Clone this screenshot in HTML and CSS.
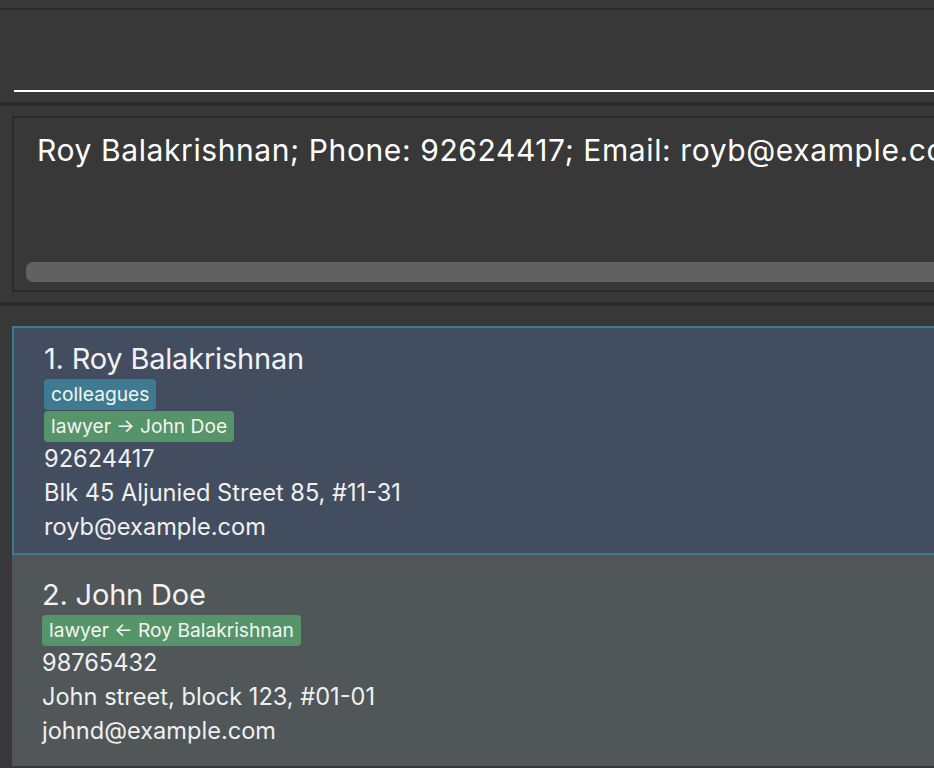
FILE: index.html
```html
<!DOCTYPE html>
<html>
<head>
<meta charset="utf-8">
<link rel="stylesheet" href="styles.css">
</head>
<body>
<div class="app">
  <div class="top-strip"></div>
  <section class="command-pane">
    <div class="command-field"></div>
  </section>
  <div class="separator"></div>
  <section class="result-pane">
    <div class="result-box">
      <div class="result-text">Roy Balakrishnan; Phone: 92624417; Email: royb@example.com; Address: Blk 45 Aljunied Street 85, #11-31; Tags: [colleagues]</div>
      <div class="scrollbar"></div>
    </div>
  </section>
  <div class="separator"></div>
  <section class="list-pane">
    <div class="card card-selected">
      <div class="card-name">1. Roy Balakrishnan</div>
      <div class="tags">
        <span class="tag tag-blue">colleagues</span>
        <span class="tag tag-green">lawyer → John Doe</span>
      </div>
      <div class="card-line">92624417</div>
      <div class="card-line">Blk 45 Aljunied Street 85, #11-31</div>
      <div class="card-line">royb@example.com</div>
    </div>
    <div class="card card-odd">
      <div class="card-name">2. John Doe</div>
      <div class="tags">
        <span class="tag tag-green">lawyer ← Roy Balakrishnan</span>
      </div>
      <div class="card-line">98765432</div>
      <div class="card-line">John street, block 123, #01-01</div>
      <div class="card-line">johnd@example.com</div>
    </div>
  </section>
</div>
</body>
</html>
```
FILE: styles.css
```css
html, body {
  margin: 0;
  padding: 0;
  background: #383838;
  overflow: hidden;
  height: 768px;
}
.app {
  width: 1200px;
  font-family: Inter, "Noto Sans", sans-serif;
  color: #f2f2f2;
}
.top-strip {
  height: 8px;
  border-bottom: 2px solid #2b2b2b;
}
.command-pane {
  height: 92px;
  padding-left: 14px;
  box-sizing: border-box;
}
.command-field {
  height: 80px;
  border-bottom: 2px solid #ffffff;
}
.separator {
  height: 4px;
  background: #2b2b2b;
}
.result-pane {
  padding: 10px 0 10px 12px;
}
.result-box {
  height: 176px;
  box-sizing: border-box;
  border: 2px solid #2b2b2b;
  padding: 14px 0 0 12px;
  display: flex;
  flex-direction: column;
}
.result-text {
  font-size: 30px;
  line-height: 36px;
  white-space: nowrap;
  padding-left: 11px;
  color: #ffffff;
  flex: 1;
  letter-spacing: 0.6px;
}
.scrollbar {
  height: 20px;
  background: #616161;
  border-radius: 7px;
  margin-bottom: 8px;
}
.list-pane {
  padding: 20px 0 0 12px;
}
.card {
  box-sizing: border-box;
}
.card-selected {
  background: #424d5f;
  border: 2px solid #3e7b91;
  height: 229px;
  padding-top: 12px;
  padding-left: 30px;
}
.card-odd {
  background: #515658;
  height: 211px;
  padding-top: 21px;
  padding-left: 30px;
}
.card-name {
  font-size: 29px;
  line-height: 38px;
  letter-spacing: -0.2px;
}
.tags {
  display: flex;
  flex-direction: column;
  align-items: flex-start;
  gap: 1px;
  margin-top: 1px;
}
.tag {
  font-size: 19.2px;
  line-height: 31px;
  height: 31px;
  padding: 0 7px;
  border-radius: 4px;
  color: #f4f4f4;
}
.tag-blue {
  background: #3e7b91;
}
.tag-green {
  background: #56956a;
}
.card-line {
  font-size: 23.6px;
  line-height: 34px;
  color: #f0f0f0;
}
```
